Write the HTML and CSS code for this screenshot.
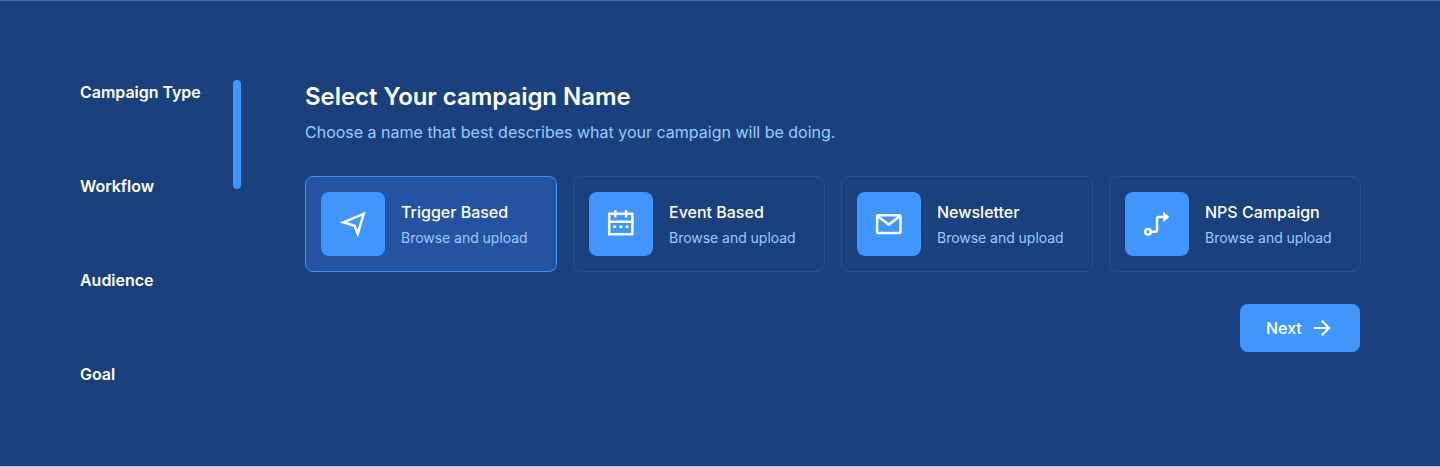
FILE: index.html
```html
<!DOCTYPE html>
<html lang="en">
<head>
<meta charset="utf-8">
<title>Campaign setup</title>
<link rel="stylesheet" href="styles.css">
</head>
<body>
<div class="page">
  <nav class="steps">
    <ul class="step-list">
      <li>Campaign Type</li>
      <li>Workflow</li>
      <li>Audience</li>
      <li>Goal</li>
    </ul>
    <div class="progress"></div>
  </nav>
  <main class="content">
    <h1 class="title">Select Your campaign Name</h1>
    <p class="subtitle">Choose a name that best describes what your campaign will be doing.</p>
    <div class="cards">
      <div class="card selected">
        <div class="tile"><svg viewBox="0 0 64 64"><path d="M22.2 30.3 42.7 21.9 36.7 41.6 33.6 33.8Z"/></svg></div>
        <div><div class="name">Trigger Based</div><div class="hint">Browse and upload</div></div>
      </div>
      <div class="card">
        <div class="tile"><svg viewBox="0 0 64 64"><path d="M20.2 21.7H43.4V42.3H20.2ZM20.2 29.8H43.4M26.2 18V25.5M37.1 18V25.5"/><path d="M24.3 34.7H27.2M30.4 34.7H33.3M36.5 34.7H39.4"/></svg></div>
        <div><div class="name">Event Based</div><div class="hint">Browse and upload</div></div>
      </div>
      <div class="card">
        <div class="tile"><svg viewBox="0 0 64 64"><rect x="20.1" y="23.2" width="23.4" height="17.9" rx="1.2"/><path d="M20.8 24.2 31.8 32.6 42.8 24.2"/></svg></div>
        <div><div class="name">Newsletter</div><div class="hint">Browse and upload</div></div>
      </div>
      <div class="card">
        <div class="tile"><svg viewBox="0 0 64 64"><circle cx="23" cy="39.8" r="2.8"/><path d="M25.8 39.8H30.2Q32 39.8 32 38V26.7Q32 24.9 33.8 24.9H39"/><path class="solid" d="M38.1 19.6 44.5 24.9 38.1 30.2Z"/></svg></div>
        <div><div class="name">NPS Campaign</div><div class="hint">Browse and upload</div></div>
      </div>
    </div>
    <button class="next">Next<svg viewBox="0 0 18 16"><path d="M.8 8H16M8.9 .8 16 8 8.9 15.2"/></svg></button>
  </main>
</div>
</body>
</html>
```
FILE: styles.css
```css
* { box-sizing: border-box; }
body { margin: 0; font-family: Inter, "Liberation Sans", sans-serif; color: #fff; background: #1a407d; }
.page { display: flex; gap: 64px; height: 467px; padding: 79px 79px 0 80px; border-top: 1px solid #4670ab; border-bottom: 1px solid #b9cce5; }
.steps { display: flex; justify-content: space-between; width: 161px; }
.step-list { display: flex; flex-direction: column; gap: 70px; margin: 0; padding: 0; list-style: none; font-size: 16px; line-height: 24px; font-weight: 600; letter-spacing: -.03px; white-space: nowrap; }
.progress { width: 8px; height: 109px; border-radius: 4px; background: #4096fb; }
.content { display: flex; flex-direction: column; width: 1056px; }
.title { margin: 0; font-size: 24px; line-height: 34px; font-weight: 600; letter-spacing: -.05px; }
.subtitle { margin: 6px 0 0; font-size: 16px; line-height: 25px; color: #9accff; }
.cards { display: grid; grid-template-columns: repeat(4, 252px); gap: 16px; margin-top: 31px; }
.card { display: flex; align-items: center; gap: 16px; height: 96px; padding: 0 15px; border: 1px solid #24509a; border-radius: 8px; }
.selected { background: #2453a2; border-color: #4096fb; }
.tile { width: 64px; height: 64px; border-radius: 8px; background: #4096fb; }
svg { display: block; fill: none; stroke: #fff; stroke-width: 2.5; }
.tile svg { width: 64px; height: 64px; }
.solid { fill: #fff; stroke: none; }
.name { font-size: 16px; line-height: 28px; font-weight: 500; }
.hint { font-size: 14px; line-height: 24px; letter-spacing: -.03px; color: #9accff; }
.next { display: flex; align-items: center; align-self: flex-end; gap: 11px; width: 120px; height: 48px; margin: 32px 1px 0 0; padding: 0 0 0 26px; border: 0; border-radius: 8px; background: #4096fb; color: #fff; font: 500 16px/24px Inter, "Liberation Sans", sans-serif; }
.next svg { width: 18px; height: 16px; stroke-width: 2.2; }
```
